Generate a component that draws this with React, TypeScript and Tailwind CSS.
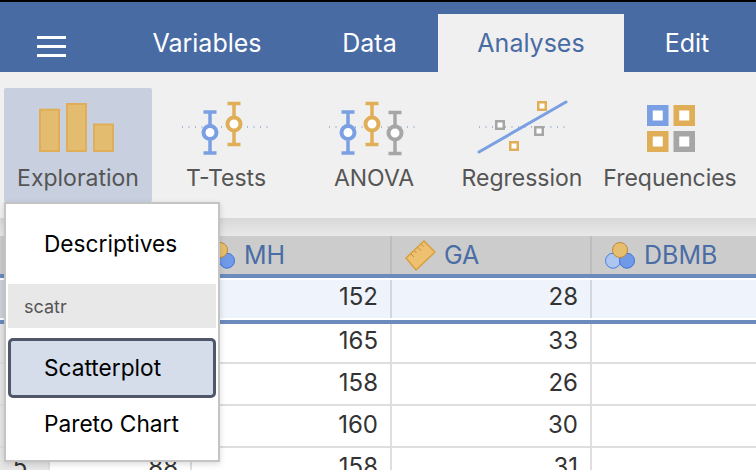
const FONT = "font-['Inter','Liberation_Sans',sans-serif]";

const BLUE = "#7aa0e3";
const GOLD = "#e0ae57";
const GREY = "#a6a6a6";

const Whisker = ({ x, y, color }: { x: number; y: number; color: string }) => (
  <g>
    <path d={`M${x - 6.5} ${y - 20.500}h13M${x - 6.5} ${y + 20.500}h13M${x} ${y - 20.500}v13M${x} ${y + 8}v13`} stroke={color} strokeWidth="3.5" fill="none" />
    <circle cx={x} cy={y} r="6.5" fill="#fff" stroke={color} strokeWidth="4" />
  </g>
);

const DotLine = ({ x1, x2, y }: { x1: number; x2: number; y: number }) => (
  <line x1={x1} x2={x2} y1={y} y2={y} stroke="#5d7fb5" strokeWidth="1" strokeDasharray="1 5.5" />
);

const ExplorationIcon = () => (
  <svg width="78" height="50" viewBox="0 0 78 50">
    <rect x="1" y="6.700" width="19" height="41.300" fill="#e3bc70" stroke={GOLD} strokeWidth="2" />
    <rect x="28" y="1" width="19" height="47" fill="#e3bc70" stroke={GOLD} strokeWidth="2" />
    <rect x="55" y="21.500" width="19" height="26.500" fill="#e3bc70" stroke={GOLD} strokeWidth="2" />
  </svg>
);

const TTestIcon = () => (
  <svg width="92" height="56" viewBox="0 0 92 56">
    <DotLine x1={2} x2={91} y={27} />
    <Whisker x={30} y={32.500} color={BLUE} />
    <Whisker x={54} y={24} color={GOLD} />
  </svg>
);

const AnovaIcon = () => (
  <svg width="92" height="56" viewBox="0 0 92 56">
    <DotLine x1={1} x2={91} y={27} />
    <Whisker x={20} y={32.500} color={BLUE} />
    <Whisker x={44} y={24} color={GOLD} />
    <Whisker x={67} y={33} color={GREY} />
  </svg>
);

const Dot = ({ x, y, color }: { x: number; y: number; color: string }) => (
  <rect x={x - 3.75} y={y - 3.75} width="7.5" height="7.5" fill="#fff" stroke={color} strokeWidth="2.5" />
);

const RegressionIcon = () => (
  <svg width="92" height="56" viewBox="0 0 92 56">
    <DotLine x1={3} x2={91} y={27} />
    <line x1={3} y1={52} x2={90} y2={2} stroke={BLUE} strokeWidth="3" strokeLinecap="round" />
    <Dot x={24} y={25} color={GREY} />
    <Dot x={38} y={46} color={GOLD} />
    <Dot x={63} y={31} color={GREY} />
    <Dot x={66} y={6} color={GOLD} />
  </svg>
);

const Cell = ({ x, y, color }: { x: number; y: number; color: string }) => (
  <g>
    <rect x={x} y={y} width="21.500" height="21" fill={color} />
    <rect x={x + 5.75} y={y + 5.5} width="10" height="10" fill="#fff" />
  </g>
);

const FrequenciesIcon = () => (
  <svg className="mt-[2px] ml-[2px]" width="48" height="48" viewBox="0 0 48 48">
    <Cell x={0} y={0} color={BLUE} />
    <Cell x={26.5} y={0} color={GOLD} />
    <Cell x={0} y={26} color={GOLD} />
    <Cell x={26.5} y={26} color={GREY} />
  </svg>
);

const NominalIcon = () => (
  <svg width="30" height="27" viewBox="0 0 30 27">
    <circle cx="8" cy="18.700" r="7.500" fill="#adc6f0" stroke="#4a7be0" strokeWidth="1" />
    <circle cx="22" cy="18.700" r="7.500" fill="#709ae6" stroke="#3f70dc" strokeWidth="1" />
    <circle cx="15" cy="8" r="7.500" fill="#e6be70" stroke="#bd8a35" strokeWidth="1" />
  </svg>
);

const RulerIcon = () => (
  <svg width="31" height="31" viewBox="0 0 31 31">
    <path d="M1 18 19 1l11 11-19 18z" fill="#eec170" stroke="#d99f3e" strokeWidth="1.500" />
    <path d="M6 14l3 3M9.500 11l2 2M13 7.500l3 3M16.500 4.500l2 2" stroke="#b98a3c" strokeWidth="1" />
  </svg>
);

const ribbon = [
  { label: "Exploration", icon: <ExplorationIcon />, active: true },
  { label: "T-Tests", icon: <TTestIcon /> },
  { label: "ANOVA", icon: <AnovaIcon /> },
  { label: "Regression", icon: <RegressionIcon /> },
  { label: "Frequencies", icon: <FrequenciesIcon /> },
];

const rows = [
  { n: "1", a: "", mh: "152", ga: "28", selected: true },
  { n: "2", a: "", mh: "165", ga: "33", short: true },
  { n: "3", a: "", mh: "158", ga: "26" },
  { n: "4", a: "", mh: "160", ga: "30" },
  { n: "5", a: "88", mh: "158", ga: "31" },
];

const Ribbon = () => (
  <div className="flex h-[146px] bg-[#f0f0f0] pl-[4px] pt-[16px]">
    {ribbon.map((b) => (
      <div
        key={b.label}
        className={`w-[148px] h-[114px] flex flex-col items-center rounded-[2px] ${b.active ? "bg-[#c8d0df]" : ""}`}
      >
        <div className="h-[60px] flex items-center justify-center mt-[10px]">{b.icon}</div>
        <div className="text-[23px] leading-[26px] mt-[7px] text-[#555]">{b.label}</div>
      </div>
    ))}
  </div>
);

const rowClass = (r: (typeof rows)[number]) => {
  if (r.selected) return "flex h-[50px] py-[2px] border-y-4 border-[#6b8bbd] bg-white";
  if (r.short) return "flex h-[40px] border-b-2 border-[#dedede]";
  return "flex h-[42px] border-b-2 border-[#dedede]";
};

const Grid = () => (
  <div className="text-[24px] text-[#333]">
    <div className="flex h-[38px] bg-[#cccccc] text-[25px] text-[#4a6da5]">
      <div className="w-[50px] border-r-2 border-[#c0c0c0]" />
      <div className="w-[142px] border-r-2 border-[#c0c0c0]" />
      <div className="w-[200px] border-r-2 border-[#bdbdbd] flex items-center pl-[13px] gap-[9px]">
        <NominalIcon />
        <span className="pt-[1px]">MH</span>
      </div>
      <div className="w-[200px] border-r-2 border-[#bdbdbd] flex items-center pl-[13px] gap-[8px]">
        <RulerIcon />
        <span className="pt-[1px]">GA</span>
      </div>
      <div className="flex-1 flex items-center pl-[13px] gap-[9px]">
        <NominalIcon />
        <span className="pt-[1px]">DBMB</span>
      </div>
    </div>
    {rows.map((r) => {
      const pad = r.selected ? "pb-[5px]" : r.short ? "pb-[4px]" : "pb-[2px]";
      const cell = r.selected ? "bg-[#eff3fb] border-[#d2d7e2]" : "border-[#dedede]";
      return (
        <div key={r.n} className={rowClass(r)}>
          <div className={`w-[50px] flex items-center justify-center pr-[8px] border-r-2 ${pad} ${r.selected ? "bg-[#cdd1d9] border-[#cdd1d9]" : "bg-[#e6e6e6] border-[#dedede]"}`}>{r.n}</div>
          <div className={`w-[142px] flex items-center justify-end pr-[12px] border-r-2 ${pad} ${cell}`}>{r.a}</div>
          <div className={`w-[200px] flex items-center justify-end pr-[12px] border-r-2 ${pad} ${cell}`}>{r.mh}</div>
          <div className={`w-[200px] flex items-center justify-end pr-[12px] border-r-2 ${pad} ${cell}`}>{r.ga}</div>
          <div className={`flex-1 ${r.selected ? "bg-[#eff3fb]" : ""}`} />
        </div>
      );
    })}
  </div>
);

const Menu = () => (
  <div className="absolute left-[4px] top-[202px] w-[216px] h-[260px] bg-white border-2 border-[#c4c4c4] shadow-[0_2px_6px_rgba(0,0,0,0.15)] text-[22.7px] text-black flex flex-col px-[2px]">
    <div className="h-[80px] flex items-center pl-[36px] shrink-0">Descriptives</div>
    <div className="h-[44px] bg-[#e8e8e8] flex items-center pl-[16px] text-[18px] text-[#555] shrink-0">scatr</div>
    <div className="mt-[10px] h-[60px] rounded-[5px] border-[3px] border-[#4f5768] bg-[#d5dcea] flex items-center pl-[33px] shrink-0">Scatterplot</div>
    <div className="h-[52px] flex items-center pl-[36px] shrink-0">Pareto Chart</div>
  </div>
);

export default function App() {
  return (
    <div className={`${FONT} relative w-[756px] h-[470px] overflow-hidden bg-white`}>
      <div className="h-[2px] bg-black" />
      <div className="h-[70px] bg-[#496ba4] flex text-white text-[25px] pt-[12px]">
        <div className="w-[113px] pl-[37px] pt-[22px]">
          <div className="w-[29px] flex flex-col gap-[6px]">
            <div className="h-[3px] bg-white" />
            <div className="h-[3px] bg-white" />
            <div className="h-[3px] bg-white" />
          </div>
        </div>
        <div className="w-[188px] text-center pt-[13px] leading-[32px]">Variables</div>
        <div className="w-[137px] text-center pt-[13px] leading-[32px]">Data</div>
        <div className="w-[186px] text-center bg-[#f0f0f0] text-[#496ba4] pt-[13px] leading-[32px]">Analyses</div>
        <div className="w-[126px] text-center pt-[13px] leading-[32px]">Edit</div>
      </div>
      <Ribbon />
      <div className="h-[18px] bg-gradient-to-b from-[#d8d8d8] to-[#e8e8e8]" />
      <Grid />
      <Menu />
    </div>
  );
}
